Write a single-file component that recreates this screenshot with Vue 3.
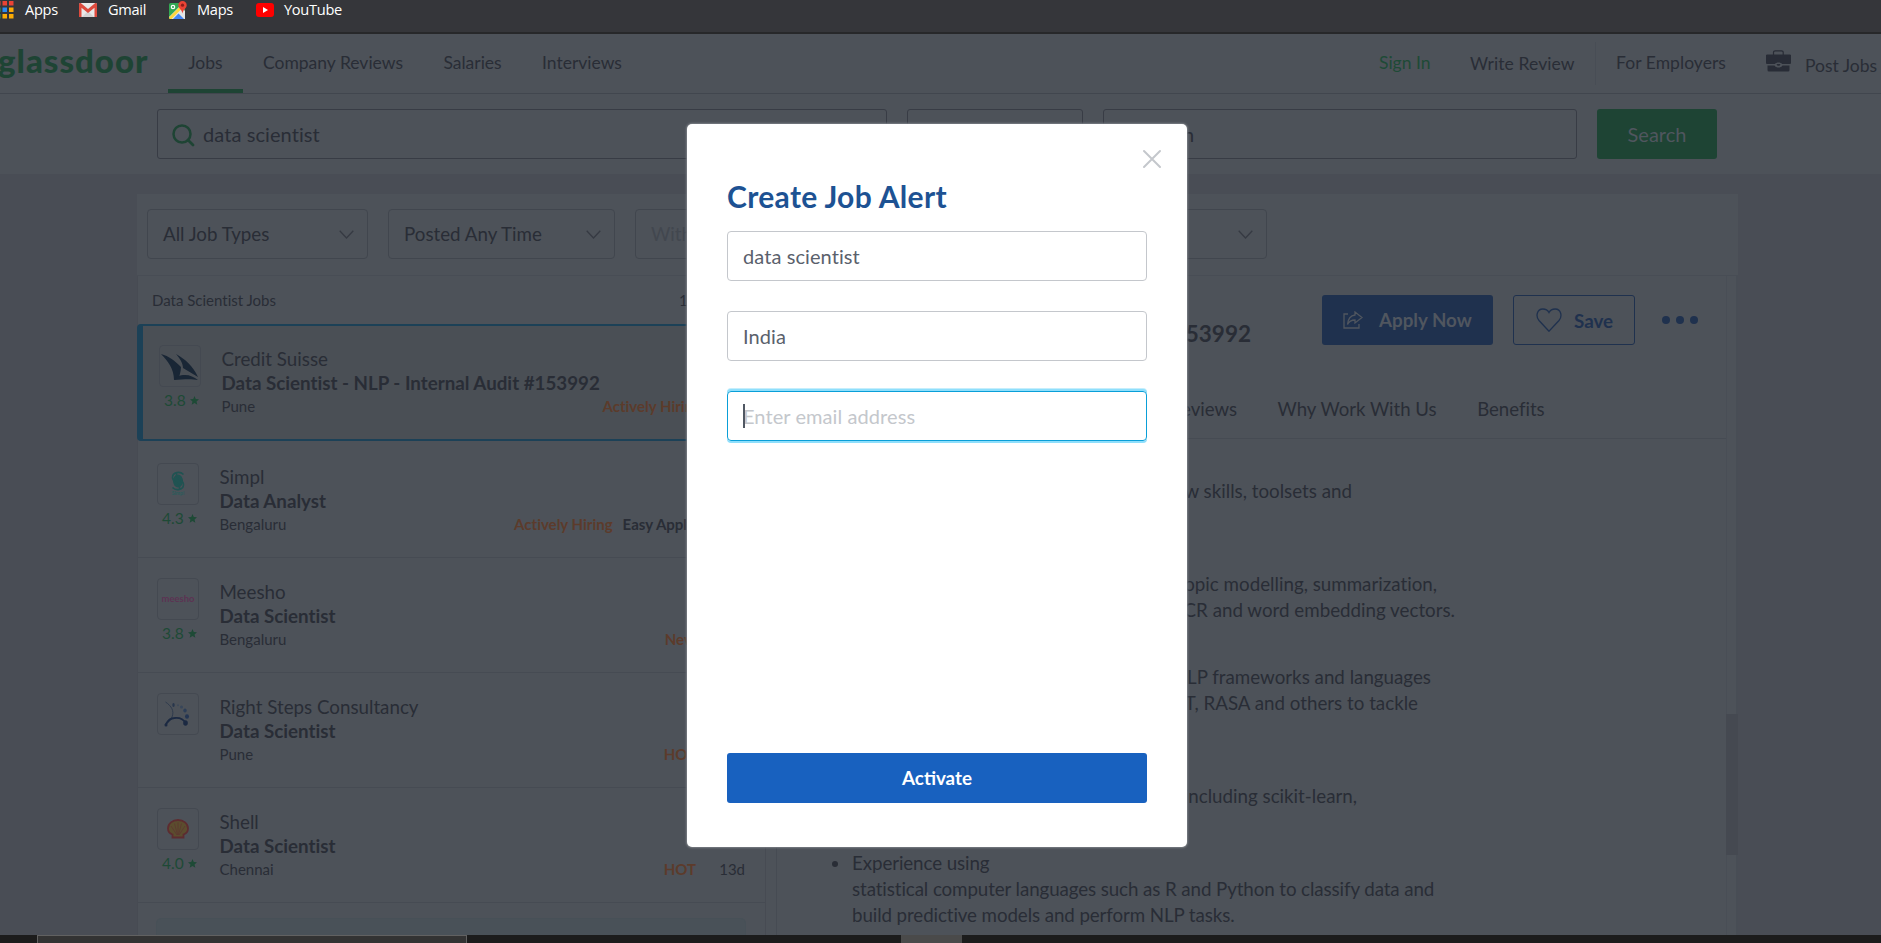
<script setup>
const bookmarks = ['Apps', 'Gmail', 'Maps', 'YouTube']

const jobs = [
  { id: 'cs', company: 'Credit Suisse', title: 'Data Scientist - NLP - Internal Audit #153992', place: 'Pune', rating: '3.8', tags: ['Actively Hiring'], age: '9d', active: true },
  { id: 'simpl', company: 'Simpl', title: 'Data Analyst', place: 'Bengaluru', rating: '4.3', tags: ['Actively Hiring'], easy: true, age: '1d' },
  { id: 'meesho', company: 'Meesho', title: 'Data Scientist', place: 'Bengaluru', rating: '3.8', tags: ['New'], age: '1d' },
  { id: 'steps', company: 'Right Steps Consultancy', title: 'Data Scientist', place: 'Pune', rating: '', tags: ['HOT'], age: '8d' },
  { id: 'shell', company: 'Shell', title: 'Data Scientist', place: 'Chennai', rating: '4.0', tags: ['HOT'], age: '13d' },
]

/* width: distance from the paragraph's left edge to the end of the line */
const paragraphs = [
  [{ text: 'new skills, toolsets and', width: 500 }],
  [
    { text: 'topic modelling, summarization,', width: 585 },
    { text: 'OCR and word embedding vectors.', width: 603 },
  ],
  [
    { text: 'NLP frameworks and languages', width: 579 },
    { text: 'BERT, RASA and others to tackle', width: 566 },
  ],
  [{ text: 'including scikit-learn,', width: 505 }],
]
</script>

<template>
  <div class="screen">
    <div class="bookmarks">
      <div v-for="b in bookmarks" :key="b" class="bookmark" :class="'bm-' + b.toLowerCase()">
        <svg v-if="b === 'Apps'" width="18" height="20" viewBox="0 0 18 20">
          <rect x="0" y="1" width="4.500" height="4.500" fill="#ea4335" /><rect x="6.500" y="1" width="4.500" height="4.500" fill="#ea4335" /><rect x="13" y="1" width="4.500" height="4.500" fill="#ea4335" />
          <rect x="0" y="7.500" width="4.500" height="4.500" fill="#34a853" /><rect x="6.500" y="7.500" width="4.500" height="4.500" fill="#2a8cf4" /><rect x="13" y="7.500" width="4.500" height="4.500" fill="#fbab05" />
          <rect x="0" y="14" width="4.500" height="4.500" fill="#34a853" /><rect x="6.500" y="14" width="4.500" height="4.500" fill="#fbab05" /><rect x="13" y="14" width="4.500" height="4.500" fill="#fbab05" />
        </svg>
        <svg v-else-if="b === 'Gmail'" width="18" height="14" viewBox="0 0 18 14">
          <rect width="18" height="14" rx="1.500" fill="#e9e9e9" />
          <path d="M3 14 9 8l6 6z" fill="#d3d3d3" />
          <path d="M0 1.500V14h2.500V4.800L9 10l6.500-5.200V14H18V1.500C18 0 16.500 0 16 .2L9 6 2 .2C1.500 0 0 0 0 1.500z" fill="#dd4b3e" />
        </svg>
        <svg v-else-if="b === 'Maps'" width="18" height="18" viewBox="0 0 18 18">
          <rect y="2" width="16" height="16" rx="1.500" fill="#34a853" />
          <path d="M0 16 11 5l5 5v8H2z" fill="#e4e6e6" />
          <path d="M0 16.500 11 5.500l2 2L2.500 18H1.500C.5 18 0 17.500 0 16.500z" fill="#fdd63c" />
          <path d="M4 18 9.500 12.500 15 18z" fill="#4285f4" />
          <circle cx="4" cy="6" r="1.700" fill="none" stroke="#fff" stroke-width="1.200" />
          <path d="M13.500 0A4.200 4.200 0 0 0 9.300 4.200c0 3 3.400 4 4.200 8.300.8-4.300 4.200-5.300 4.200-8.300A4.200 4.200 0 0 0 13.500 0z" fill="#ea4335" />
          <circle cx="13.500" cy="4.200" r="1.600" fill="#8c1d18" />
        </svg>
        <svg v-else width="18" height="14" viewBox="0 0 18 14">
          <rect width="18" height="14" rx="3" fill="#f00" /><path d="M7 4v6l5-3z" fill="#fff" />
        </svg>
        <span>{{ b }}</span>
      </div>
    </div>

    <header class="topnav">
      <div class="brand">glassdoor</div>
      <nav class="left">
        <a class="tab current">Jobs</a><a class="tab">Company Reviews</a><a class="tab">Salaries</a><a class="tab">Interviews</a>
      </nav>
      <nav class="right">
        <a class="signin">Sign In</a>
        <a class="write">Write Review</a>
        <a class="emp">For Employers</a>
        <svg class="case" width="25" height="22" viewBox="0 0 25 22">
          <path d="M7.500 5V2.500A1.700 1.700 0 0 1 9.200.8h6.300a1.700 1.700 0 0 1 1.700 1.700V5" fill="none" stroke="#282c36" stroke-width="1.200" />
          <path d="M1.500 4.500h22A1.300 1.300 0 0 1 25 6v7a1 1 0 0 1-1 1h-8c-1-2-6-2-7 0H1a1 1 0 0 1-1-1V6a1.300 1.300 0 0 1 1.500-1.500z" fill="#282c36" />
          <path d="M1.500 15.500H8.500c1.500 2.800 6.500 2.800 8 0h7V20a1.500 1.500 0 0 1-1.500 1.500H3A1.500 1.500 0 0 1 1.500 20zM10.500 14h4l-1 1.700h-2z" fill="#282c36" />
        </svg>
        <a class="post">Post Jobs</a>
      </nav>
    </header>

    <section class="searchbar">
      <div class="field keyword">
        <svg width="23" height="23" viewBox="0 0 23 23"><circle cx="10" cy="10" r="8.500" fill="none" stroke="#1e4434" stroke-width="2.500" /><path d="M16 16l5 5" stroke="#1e4434" stroke-width="2.800" stroke-linecap="round" /></svg>
        <span>data scientist</span>
      </div>
      <div class="field kind"></div>
      <div class="field place"><span>Location</span></div>
      <button class="go">Search</button>
    </section>

    <main class="board">
      <div class="filters">
        <div class="select s1"><span>All Job Types</span><svg class="chev" width="15" height="9" viewBox="0 0 15 9"><path d="M.7.7 7.500 8 14.300.7" /></svg></div>
        <div class="select s2"><span>Posted Any Time</span><svg class="chev" width="15" height="9" viewBox="0 0 15 9"><path d="M.7.7 7.500 8 14.300.7" /></svg></div>
        <div class="select s3 off"><span>Within</span></div>
        <div class="select s4"><span></span><svg class="chev" width="15" height="9" viewBox="0 0 15 9"><path d="M.7.7 7.500 8 14.300.7" /></svg></div>
      </div>

      <div class="columns">
        <section class="list">
          <div class="listhead"><span>Data Scientist Jobs</span><span class="count">1,842 Jobs</span></div>
          <article v-for="j in jobs" :key="j.id" class="job" :class="{ active: j.active }">
            <div class="side">
              <div class="logo">
                <svg v-if="j.id === 'cs'" width="40" height="42" viewBox="0 0 40 42">
                  <path d="M1 9c8 2 14 7 20 13 0 5-2 9-2 11l-5 2c0-11-6-19-13-26z" fill="#192635" />
                  <path d="M16 9c9 5 17 12 22 23l-15-9c0-5-3-9-7-14z" fill="#192635" />
                  <path d="M14 35c1-3 6-5 11-5 5 0 9 2 13 5-5-1-13-1-24 0z" fill="#192635" />
                </svg>
                <svg v-else-if="j.id === 'simpl'" width="40" height="42" viewBox="0 0 40 42">
                  <ellipse cx="20" cy="18" rx="5" ry="6.500" fill="#205352" />
                  <path d="M25.500 11.500c-3.500-3.500-11-2.500-11 3 0 6 8 4 7 11M14.500 24.500c3.500 3.500 11 2.500 11-3 0-6-8-4-7-11" fill="none" stroke="#205352" stroke-width="1.600" />
                  <text x="20" y="31.500" text-anchor="middle" class="tiny">Simpl</text>
                </svg>
                <span v-else-if="j.id === 'meesho'" class="meesho">meesho</span>
                <svg v-else-if="j.id === 'steps'" width="40" height="42" viewBox="0 0 40 42">
                  <path d="M7.500 9c6 4 9 9 6.500 15-1 3-4 5-6 8.500" fill="none" stroke="#2f3b4d" stroke-width="1" />
                  <path d="M7.500 32c2-4 5-7 9-7 5-.5 9 1 11 5" fill="none" stroke="#1b2942" stroke-width="1.800" />
                  <ellipse cx="27.500" cy="30" rx="2.300" ry="2.700" fill="#1b2942" /><ellipse cx="29" cy="23.500" rx="2" ry="2.200" fill="#243552" /><ellipse cx="27" cy="17.500" rx="1.700" ry="2" fill="#2c3d57" />
                  <circle cx="23.500" cy="14" r="1.500" fill="#38465a" /><circle cx="20" cy="12.300" r="1" fill="#3e4a5a" /><ellipse cx="15.500" cy="12" rx="1.200" ry="2" fill="#28364c" /><circle cx="8" cy="32" r="1.500" fill="#1b2942" />
                </svg>
                <svg v-else width="40" height="42" viewBox="0 0 40 42">
                  <path d="M14.500 29.500v-3C11.500 25.500 10 23 10 20.500c0-5 4.500-8.500 10-8.500s10 3.500 10 8.500c0 2.500-1.500 5-4.500 6v3z" fill="#5b4d2e" stroke="#5d2c30" stroke-width="1.800" />
                  <path d="M19 27 13 18M19.500 27l-3-11.500M20 27V14.500M20.500 27l3-11.500M21 27l6-9" stroke="#5d3630" stroke-width=".8" />
                </svg>
              </div>
              <div v-if="j.rating" class="rating">{{ j.rating }}<svg width="9" height="9" viewBox="0 0 24 24"><path d="M12 0l3.400 8.300 8.600.6-6.600 5.600L19.500 23 12 18.400 4.500 23l2.100-8.500L0 8.900l8.600-.6z" fill="#1e4a36" /></svg></div>
            </div>
            <div class="info">
              <div class="company">{{ j.company }}</div>
              <div class="title">{{ j.title }}</div>
              <div class="meta">
                <span class="where">{{ j.place }}</span>
                <span v-for="t in j.tags" :key="t" class="tag">{{ t }}</span>
                <span v-if="j.easy" class="easy">Easy Apply</span>
                <span class="age">{{ j.age }}</span>
              </div>
            </div>
          </article>
          <div class="banner"></div>
        </section>

        <section class="detail">
          <div class="pane">
            <div class="dhead">
              <h2>Internal Audit #153992</h2>
              <button class="apply">
                <svg width="20" height="18" viewBox="0 0 20 18"><path d="M5 3H1v14h15v-4" /><path d="M12 1l7 5.500L12 12V9C8 9 6 10.500 4.500 13.500 5 8 7.500 4.500 12 4z" /></svg>
                <span>Apply Now</span>
              </button>
              <button class="save">
                <svg width="26" height="24" viewBox="0 0 26 24"><path d="M13 23.200 3 12.500C-.5 8.500.8 1 6.800 1 9.800 1 12 2.500 13 4.500 14 2.500 16.200 1 19.200 1c6 0 7.300 7.500 3.800 11.500z" /></svg>
                <span>Save</span>
              </button>
              <div class="dots"><i></i><i></i><i></i></div>
            </div>
            <div class="dtabs"><span class="rev">Reviews</span><span>Why Work With Us</span><span>Benefits</span></div>
            <div class="copy">
              <div v-for="(p, i) in paragraphs" :key="i" class="para" :class="'p' + i">
                <div v-for="l in p" :key="l.text" class="line" :style="{ width: l.width + 'px' }">{{ l.text }}</div>
              </div>
              <ul><li>Experience using<br>statistical computer languages such as R and Python to classify data and<br>build predictive models and perform NLP tasks.</li></ul>
            </div>
          </div>
          <div class="track"><div class="thumb"></div></div>
        </section>
      </div>
    </main>

    <footer class="taskbar"><div class="find"></div><div class="task"></div></footer>

    <div class="modal">
      <svg class="close" width="20" height="20" viewBox="0 0 20 20"><path d="M2 2l16 16M18 2L2 18" /></svg>
      <h1>Create Job Alert</h1>
      <div class="input">data scientist</div>
      <div class="input">India</div>
      <div class="input focus"><i class="caret"></i>Enter email address</div>
      <button class="activate">Activate</button>
    </div>
  </div>
</template>

<style>
html, body { margin: 0; overflow: hidden; }
</style>

<style scoped>
* { box-sizing: border-box; }
.screen { position: relative; width: 1881px; height: 943px; overflow: hidden; display: flex; flex-direction: column; background: #494d55; color: #292d36; font-family: Lato, "Open Sans", sans-serif; font-variant-ligatures: no-common-ligatures; white-space: nowrap; }
button { font-family: inherit; padding: 0; margin: 0; border: 0; }
svg { display: block; flex: none; }

.bookmarks { height: 34px; flex: none; display: flex; background: #35363a; border-bottom: 2px solid #27282a; }
.bookmark { display: flex; height: 20px; align-items: center; color: #fff; font: 14.600px/20px "Open Sans", sans-serif; letter-spacing: -0.3px; }
.bookmark span { padding-bottom: 2px; }
.bm-apps { width: 83px; margin-left: -4px; gap: 11px; }
.bm-gmail { width: 90px; gap: 11px; }
.bm-maps { width: 87px; gap: 10px; }
.bm-youtube { gap: 10px; }

.topnav { height: 60px; flex: none; display: flex; background: #4d5259; border-bottom: 1px solid #41464e; font-size: 17.500px; line-height: 58px; }
.brand { width: 168px; margin-left: -2px; font-weight: 900; font-size: 33px; line-height: 52px; color: #1e4434; letter-spacing: 1px; flex: none; }
.left { display: flex; margin-left: 2px; }
.tab { padding: 0 20.200px; }
.tab.current { border-bottom: 4px solid #1e4434; }
.right { margin-left: auto; display: flex; }
.signin { color: #1e4a36; width: 91px; }
.write { width: 125px; line-height: 59px; letter-spacing: 0.1px; }
.emp { position: relative; padding-left: 21px; letter-spacing: 0.05px; }
.emp::before { content: ""; position: absolute; left: 0; top: 8px; height: 43px; border-left: 1px solid #484d55; }
.right .emp { width: 171px; }
.case { margin-top: 16px; margin-right: 14px; }
.post { line-height: 64px; width: 76px; }

.searchbar { height: 80px; flex: none; background: #4d5259; padding: 15px 0 0 157px; display: flex; }
.field { height: 50px; border: 1px solid #383c45; border-radius: 3px; font-size: 20px; line-height: 49px; letter-spacing: 0.08px; }
.keyword { width: 730px; margin-right: 20px; display: flex; padding-left: 14px; gap: 8px; }
.keyword svg { margin-top: 14px; }
.kind { width: 176px; margin-right: 20px; }
.place { width: 474px; margin-right: 20px; padding-left: 15px; }
.go { width: 120px; height: 50px; border-radius: 3px; background: #1e4434; color: #50565f; font-size: 20px; }

.board { flex: none; height: 741px; margin: 20px 143px 0 137px; background: #4d5259; }
.filters { height: 82px; padding: 15px 0 0 10px; display: flex; border-bottom: 1px solid #484d55; }
.select { height: 50px; border: 1px solid #41464e; border-radius: 4px; display: flex; justify-content: space-between; align-items: center; padding: 0 13px 0 15px; font-size: 18.750px; }
.select span { padding-bottom: 2px; }
.s1 { width: 221px; margin-right: 20px; }
.s2 { width: 227px; margin-right: 20px; }
.s3 { width: 200px; margin-right: 22px; }
.s4 { width: 410px; }
.off { color: #42474f; }
.chev { fill: none; stroke: #363a43; stroke-width: 1.300; }

.columns { display: flex; height: 659px; overflow: hidden; }
.list { width: 629px; border-left: 1px solid #474b53; border-right: 1px solid #474b53; flex: none; }
.listhead { height: 48px; padding: 0 21px 0 15px; display: flex; justify-content: space-between; font-size: 15px; line-height: 49px; margin-left: -1px; }
.count { width: 65px; }
.job { height: 115px; border-bottom: 1px solid #464b53; display: flex; padding: 20px 0 0 19px; }
.job.active { height: 117px; margin: 0 0 2px -1px; background: #4a4f55; border: 2px solid #1c4157; border-left-width: 6px; border-radius: 4px; padding: 19px 0 0 16px; }
.side { width: 62.500px; flex: none; }
.logo { width: 42px; height: 42px; border: 1px solid #444951; border-radius: 4px; display: flex; align-items: center; justify-content: center; overflow: hidden; }
.rating { display: flex; align-items: center; gap: 4px; font-size: 15.500px; line-height: 20px; padding: 3px 0 0 5px; color: #1e4a36; }
.meesho { font: 700 9.500px/12px Lato, sans-serif; color: #5c3353; }
.tiny { font: 700 5px Lato, sans-serif; fill: #2a5c5b; }
.info { flex: 1; }
.company, .title { font-size: 18.750px; line-height: 24px; }
.company { padding-top: 2px; }
.title { font-weight: 700; }
.meta { display: flex; font-size: 15px; line-height: 22px; padding-right: 20px; }
.where { flex: 1; }
.tag { color: #5c3b2b; font-weight: 700; }
.easy { font-weight: 700; margin-left: 10px; }
.age { width: 49px; text-align: right; }
.easy + .age { width: 50px; }
.active .age { width: 42px; }
.banner { height: 40px; margin: 15px 19px 0 18px; background: #495158; border: 1px solid #475057; border-radius: 5px; }

.detail { margin-left: 10px; flex: 1; display: flex; border-left: 1px solid #464b53; }
.pane { flex: 1; }
.dhead { display: flex; height: 95px; padding-top: 19px; }
.dhead h2 { margin: 0 -1px 0 0; width: 474px; text-align: right; font-size: 22.500px; line-height: 77px; height: 60px; }
.apply, .save { height: 50px; border-radius: 3px; display: flex; align-items: center; font-size: 18.750px; font-weight: 700; }
.apply span { padding-bottom: 1px; }
.apply { margin-left: 72px; width: 171px; background: #1f314e; color: #50565f; padding-left: 21px; gap: 16px; }
.apply svg, .save svg { fill: none; stroke: #50565f; stroke-width: 1.300; }
.save { margin-left: 20px; width: 122px; border: 1px solid #1f314e; background: transparent; color: #1f314e; padding-left: 22px; gap: 12px; }
.save svg { stroke: #1f314e; }
.dots { display: flex; gap: 6px; margin: 21px 0 0 27px; }
.dots i { width: 8px; height: 8px; border-radius: 50%; background: #1f314e; }
.dtabs { height: 68px; border-bottom: 1px solid #464b53; display: flex; gap: 40.500px; font-size: 18.600px; line-height: 76px; }
.rev { width: 460px; text-align: right; }
.copy { font-size: 18.750px; line-height: 26px; padding-left: 75px; }
.para { padding-top: 41px; }
.p0 { padding-top: 39px; }
.line { text-align: right; }
.p1 { padding-top: 67px; }
.p3 { padding-top: 67px; }
ul { margin: 41px 0 0; padding: 0; list-style: none; letter-spacing: -0.1px; }
li { position: relative; }
li::before { content: ""; position: absolute; left: -20px; top: 11px; width: 6px; height: 6px; border-radius: 50%; background: #292d36; }
.track { width: 12px; border-left: 1px solid #494e56; border-right: 2px solid #484d55; padding-top: 438px; }
.thumb { width: 12px; height: 141px; margin-left: -1px; background: #454951; }

.taskbar { height: 8px; flex: none; background: #1c1c1c; display: flex; }
.find { margin-left: 37px; width: 430px; background: #333; border: 1px solid #616161; border-bottom: 0; }
.task { margin-left: 434px; width: 61px; background: #4a4a4a; }

.modal { position: absolute; left: 687px; top: 124px; width: 500px; height: 723px; padding: 50px 40px 44px; background: #fff; border-radius: 5px; box-shadow: 0 0 2px 1px #7b7f85; display: flex; flex-direction: column; }
.close { position: absolute; right: 25px; top: 25px; stroke: #c4c7cc; stroke-width: 2; stroke-linecap: round; }
.modal h1 { margin: 0 0 13px; font-size: 30px; line-height: 44px; font-weight: 700; color: #1d5293; letter-spacing: 0.33px; }
.input { height: 50px; flex: none; border: 1px solid #c4c7cc; border-radius: 4px; margin-bottom: 30px; padding-left: 15px; font-size: 20px; line-height: 48px; color: #5a616c; letter-spacing: 0.08px; position: relative; }
.focus { border-color: #0a9fd8; box-shadow: 0 -2px 0 #8fdffc, 0 2px 0 #8fdffc, 0 -3px 0 #c5eefc; color: #c4c7cc; }
.caret { position: absolute; left: 15px; top: 12px; width: 2px; height: 24px; background: #505863; }
.activate { margin-top: auto; height: 50px; border-radius: 3px; background: #1861bf; color: #fff; font-size: 18.750px; font-weight: 700; padding-bottom: 2px; }
</style>
